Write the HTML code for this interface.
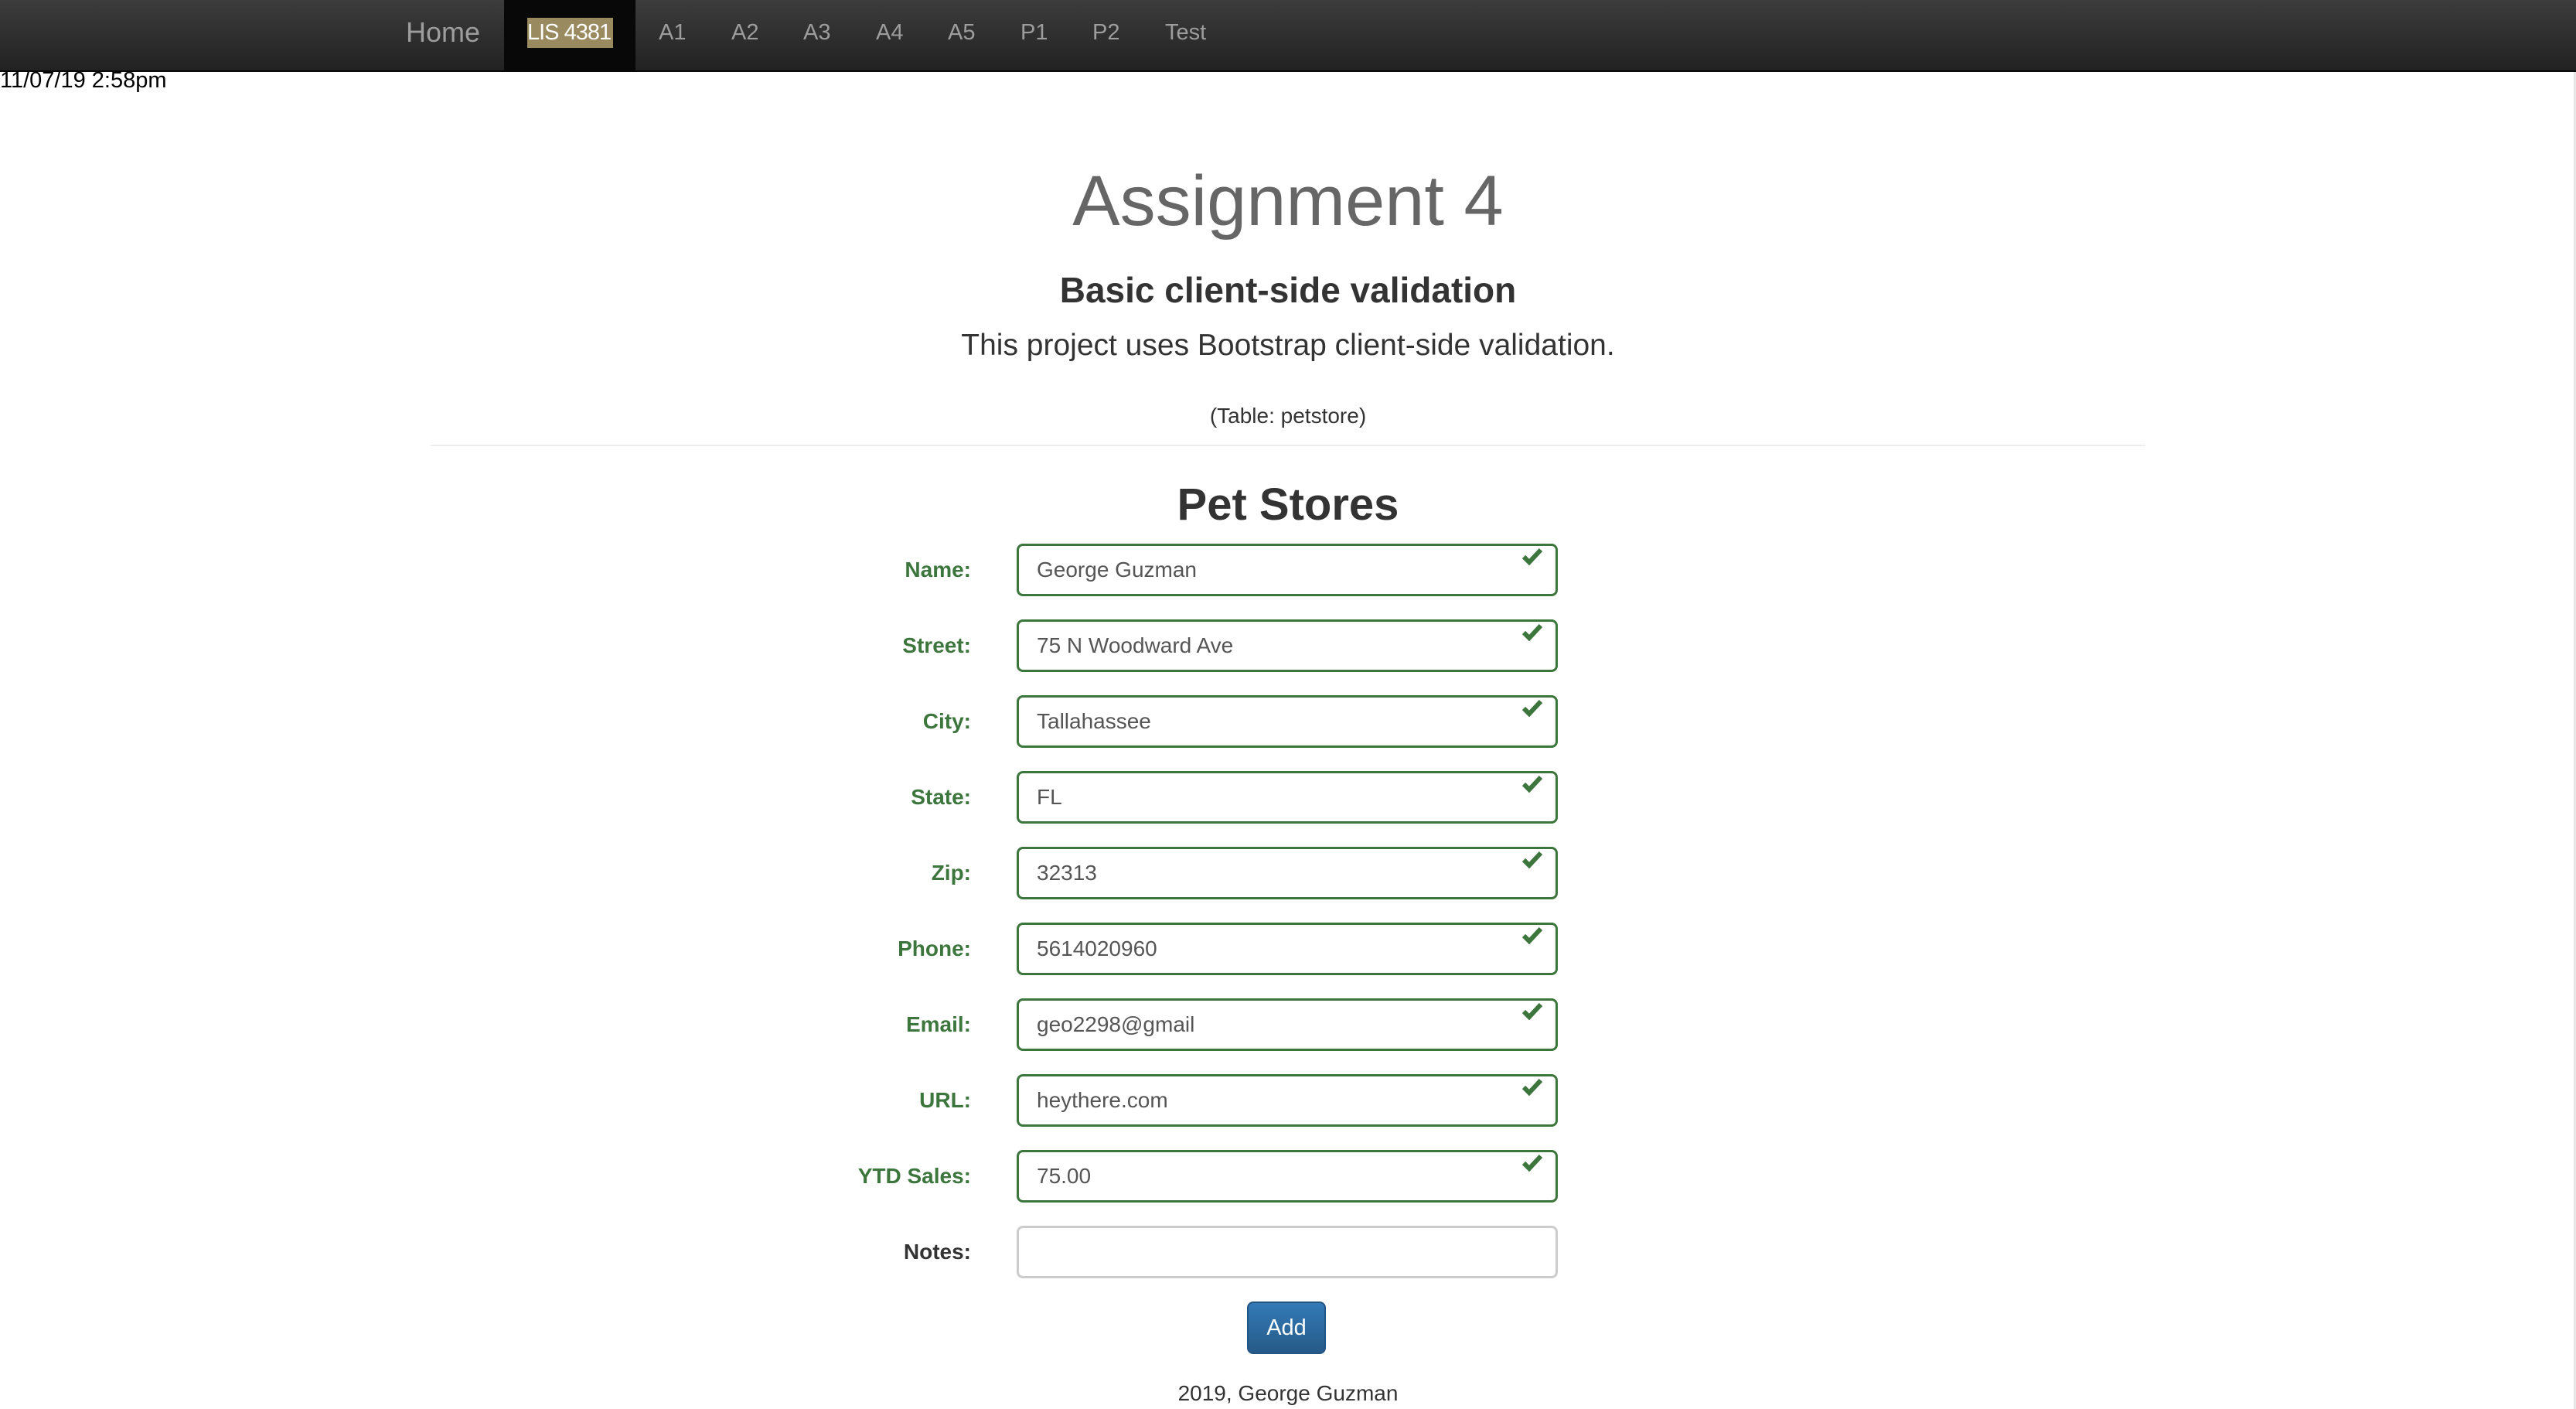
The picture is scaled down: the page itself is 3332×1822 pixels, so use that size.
<!DOCTYPE html>
<html><head><meta charset="utf-8"><style>
*{box-sizing:border-box;margin:0;padding:0}
body{width:3332px;height:1822px;background:#fff;font-family:"Liberation Sans",Arial,sans-serif;position:relative;overflow:hidden}
.nav{position:absolute;left:0;top:0;width:3332px;height:93px;background:linear-gradient(#3c3c3c,#222);border-bottom:2px solid #080808}
.nav span{position:absolute;top:0;line-height:84px;font-size:29px;color:#9d9d9d}
.act{position:absolute;left:652px;top:0;width:170px;height:91px;background:#080808}
.hl{position:absolute;left:682px;top:23px;width:111px;height:39px;background:#9a8a60}
.c{position:absolute;left:0;width:3332px;text-align:center}
.lbl{position:absolute;width:400px;left:856px;text-align:right;font-weight:bold;font-size:28px;color:#3c763d}
.inp{position:absolute;left:1315px;width:700px;height:68px;border:3px solid #3c763d;border-radius:8px;font-size:28px;color:#555;padding-left:23px;line-height:62px}
.inp svg{position:absolute;right:16px;top:1px}
</style></head><body>
<div class="nav">
<div class="act"></div><div class="hl"></div>
<span style="left:525px;font-size:36px">Home</span>
<span style="left:682px;color:#fff;letter-spacing:-1px">LIS 4381</span>
<span style="left:852px">A1</span><span style="left:946px">A2</span><span style="left:1039px">A3</span><span style="left:1133px">A4</span><span style="left:1226px">A5</span><span style="left:1320px">P1</span><span style="left:1413px">P2</span><span style="left:1507px">Test</span>
</div>
<div style="position:absolute;left:0;top:88px;font-size:29px;color:#000">11/07/19 2:58pm</div>
<div style="position:absolute;right:0;top:93px;width:3px;height:1729px;background:#e6e6e6"></div>
<div class="c" style="top:200px;font-size:92px;color:#666;line-height:120px">Assignment 4</div>
<div class="c" style="top:348px;font-size:46px;font-weight:bold;color:#333">Basic client-side validation</div>
<div class="c" style="top:425px;font-size:39px;color:#333;font-weight:300">This project uses Bootstrap client-side validation.</div>
<div class="c" style="top:522px;font-size:28px;color:#333">(Table: petstore)</div>
<div style="position:absolute;left:557px;top:575px;width:2218px;height:2px;background:#eee"></div>
<div class="c" style="top:619px;font-size:58px;font-weight:bold;color:#333">Pet Stores</div>

<div class="lbl" style="top:721px">Name:</div><div class="inp" style="top:703px">George Guzman<svg width="28" height="24" viewBox="0 0 28 24"><path d="M3 13l7 7L25 4" stroke="#3c763d" stroke-width="6" fill="none"/></svg></div>
<div class="lbl" style="top:819px">Street:</div><div class="inp" style="top:801px">75 N Woodward Ave<svg width="28" height="24" viewBox="0 0 28 24"><path d="M3 13l7 7L25 4" stroke="#3c763d" stroke-width="6" fill="none"/></svg></div>
<div class="lbl" style="top:917px">City:</div><div class="inp" style="top:899px">Tallahassee<svg width="28" height="24" viewBox="0 0 28 24"><path d="M3 13l7 7L25 4" stroke="#3c763d" stroke-width="6" fill="none"/></svg></div>
<div class="lbl" style="top:1015px">State:</div><div class="inp" style="top:997px">FL<svg width="28" height="24" viewBox="0 0 28 24"><path d="M3 13l7 7L25 4" stroke="#3c763d" stroke-width="6" fill="none"/></svg></div>
<div class="lbl" style="top:1113px">Zip:</div><div class="inp" style="top:1095px">32313<svg width="28" height="24" viewBox="0 0 28 24"><path d="M3 13l7 7L25 4" stroke="#3c763d" stroke-width="6" fill="none"/></svg></div>
<div class="lbl" style="top:1211px">Phone:</div><div class="inp" style="top:1193px">5614020960<svg width="28" height="24" viewBox="0 0 28 24"><path d="M3 13l7 7L25 4" stroke="#3c763d" stroke-width="6" fill="none"/></svg></div>
<div class="lbl" style="top:1309px">Email:</div><div class="inp" style="top:1291px">geo2298@gmail<svg width="28" height="24" viewBox="0 0 28 24"><path d="M3 13l7 7L25 4" stroke="#3c763d" stroke-width="6" fill="none"/></svg></div>
<div class="lbl" style="top:1407px">URL:</div><div class="inp" style="top:1389px">heythere.com<svg width="28" height="24" viewBox="0 0 28 24"><path d="M3 13l7 7L25 4" stroke="#3c763d" stroke-width="6" fill="none"/></svg></div>
<div class="lbl" style="top:1505px">YTD Sales:</div><div class="inp" style="top:1487px">75.00<svg width="28" height="24" viewBox="0 0 28 24"><path d="M3 13l7 7L25 4" stroke="#3c763d" stroke-width="6" fill="none"/></svg></div>
<div class="lbl" style="top:1603px;color:#333">Notes:</div><div class="inp" style="top:1585px;border-color:#ccc"></div>

<div style="position:absolute;left:1613px;top:1683px;width:102px;height:68px;background:linear-gradient(#337ab7,#265a88);border:2px solid #245580;border-radius:8px;color:#fff;font-size:29px;text-align:center;line-height:64px">Add</div>
<div class="c" style="top:1786px;font-size:28px;color:#333">2019, George Guzman</div>
</body></html>
